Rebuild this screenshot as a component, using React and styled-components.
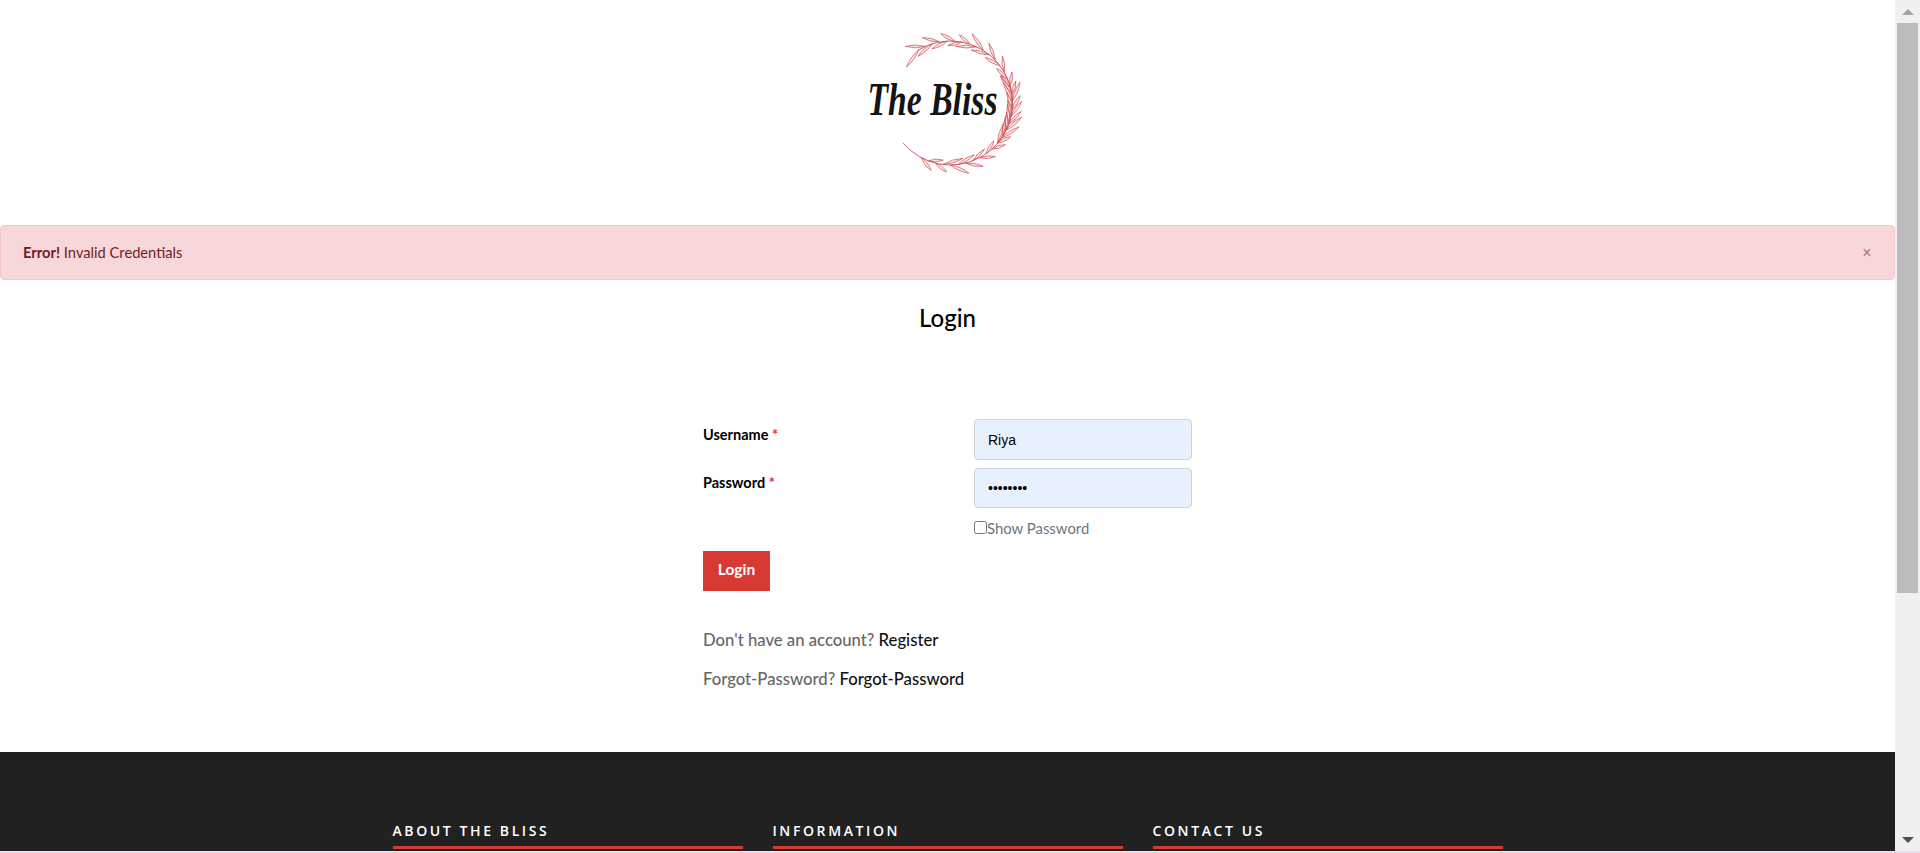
import React, { useState } from 'react';
import styled, { createGlobalStyle } from 'styled-components';

const GlobalStyle = createGlobalStyle`
  html, body {
    margin: 0;
    height: 100%;
    overflow: hidden;
    background: #e6e0f2;
  }
  * {
    box-sizing: border-box;
  }
`;

const CENTER = { x: 950, y: 103 };
const RADIUS = 62;

function polar(angle, r) {
  const rad = (angle * Math.PI) / 180;
  return [CENTER.x + r * Math.cos(rad), CENTER.y + r * Math.sin(rad)];
}

function leafPath(x, y, dir, len, width) {
  const rad = (dir * Math.PI) / 180;
  const ex = x + len * Math.cos(rad);
  const ey = y + len * Math.sin(rad);
  const mx = x + (len / 2) * Math.cos(rad);
  const my = y + (len / 2) * Math.sin(rad);
  const nx = -Math.sin(rad) * width;
  const ny = Math.cos(rad) * width;
  const f = (n) => n.toFixed(1);
  return `M${f(x)} ${f(y)}Q${f(mx + nx)} ${f(my + ny)} ${f(ex)} ${f(ey)}Q${f(mx - nx)} ${f(my - ny)} ${f(x)} ${f(y)}Z`;
}

function makeBranch(from, to, step, leafFrom) {
  const sign = Math.sign(to - from);
  const leaves = [];
  let side = 1;
  for (let a = leafFrom; sign > 0 ? a <= to : a >= to; a += step * sign) {
    const [x, y] = polar(a, RADIUS);
    const tangent = a + 90 * sign;
    const len = 14 + ((Math.abs(a) * 7) % 8);
    leaves.push(leafPath(x, y, tangent + side * 24, len, 2.8));
    side = -side;
  }
  const [sx, sy] = polar(from, RADIUS);
  const [ex, ey] = polar(to, RADIUS);
  const sweep = sign > 0 ? 1 : 0;
  const large = Math.abs(to - from) > 180 ? 1 : 0;
  return {
    stem: `M${sx} ${sy}A${RADIUS} ${RADIUS} 0 ${large} ${sweep} ${ex} ${ey}`,
    leaves,
  };
}

const branches = [makeBranch(40, -122, 7, 40), makeBranch(140, -16, 7, 118)];

function Logo() {
  return (
    <svg width="210" height="180" viewBox="842.5 10 210 180" role="img" aria-label="The Bliss">
      {branches.map((branch, i) => (
        <g key={i} stroke="#cf4c52" strokeWidth="0.7" fill="none">
          <path d={branch.stem} strokeWidth="0.9" />
          {branch.leaves.map((d, j) => (
            <path key={j} d={d} fill="#e58a8c" fillOpacity="0.22" />
          ))}
        </g>
      ))}
      <text
        x="867"
        y="115"
        textLength="130"
        lengthAdjust="spacingAndGlyphs"
        fontFamily="'Liberation Serif', serif"
        fontStyle="italic"
        fontWeight="700"
        fontSize="46"
        fill="#141414"
      >
        The Bliss
      </text>
    </svg>
  );
}

function FakeScrollbar() {
  return (
    <Rail>
      <RailArrow>
        <svg width="12" height="6" viewBox="0 0 12 6">
          <path d="M6 0L12 6H0Z" fill="#a3a3a3" />
        </svg>
      </RailArrow>
      <RailTrack>
        <RailThumb />
      </RailTrack>
      <RailArrow>
        <svg width="12" height="6" viewBox="0 0 12 6">
          <path d="M0 0H12L6 6Z" fill="#505050" />
        </svg>
      </RailArrow>
    </Rail>
  );
}

export default function App() {
  const [showPassword, setShowPassword] = useState(false);
  const [alertOpen, setAlertOpen] = useState(true);

  return (
    <Viewport>
      <GlobalStyle />
      <Page>
        <Header>
          <Logo />
        </Header>
        <AlertSlot>
          {alertOpen && (
            <Alert>
              <AlertText>
                <strong>Error!</strong> Invalid Credentials
              </AlertText>
              <CloseButton onClick={() => setAlertOpen(false)}>×</CloseButton>
            </Alert>
          )}
        </AlertSlot>
        <Title>Login</Title>
        <Form onSubmit={(e) => e.preventDefault()}>
          <FieldGrid>
            <Label $top={6}>
              Username <Required>*</Required>
            </Label>
            <Input defaultValue="Riya" $height={41} />
            <Label $top={5}>
              Password <Required>*</Required>
            </Label>
            <Input
              type={showPassword ? 'text' : 'password'}
              defaultValue="password"
              $height={40}
            />
            <ShowPassword>
              <Checkbox
                type="checkbox"
                checked={showPassword}
                onChange={(e) => setShowPassword(e.target.checked)}
              />
              Show Password
            </ShowPassword>
          </FieldGrid>
          <SubmitButton type="submit">Login</SubmitButton>
          <HelpLine>
            Don't have an account? <HelpLink href="#register">Register</HelpLink>
          </HelpLine>
          <HelpLine>
            Forgot-Password? <HelpLink href="#forgot">Forgot-Password</HelpLink>
          </HelpLine>
        </Form>
        <Footer>
          <FooterRow>
            <FooterHeading>About The Bliss</FooterHeading>
            <FooterHeading>Information</FooterHeading>
            <FooterHeading>Contact Us</FooterHeading>
          </FooterRow>
        </Footer>
      </Page>
      <FakeScrollbar />
    </Viewport>
  );
}

const Viewport = styled.div`
  height: calc(100vh - 2px);
  display: flex;
  background: #fff;
  font-family: 'Lato', 'Open Sans', sans-serif;
  color: #000;
`;

const Page = styled.main`
  flex: 1;
  min-width: 0;
  overflow: hidden;
`;

const Rail = styled.div`
  width: 25px;
  flex: none;
  display: flex;
  flex-direction: column;
  background: #f0f0f0;
`;

const RailArrow = styled.div`
  height: 23px;
  flex: none;
  display: flex;
  align-items: center;
  justify-content: center;
`;

const RailTrack = styled.div`
  flex: 1;
  padding: 0 2px;
`;

const RailThumb = styled.div`
  height: 570px;
  background: #bcbcbc;
`;

const Header = styled.header`
  height: 225px;
  padding-top: 10px;
  display: flex;
  justify-content: center;
  align-items: flex-start;
`;

const AlertSlot = styled.div`
  height: 55px;
`;

const Alert = styled.div`
  height: 55px;
  padding: 0 22px;
  display: flex;
  align-items: center;
  justify-content: space-between;
  background: #f8d7da;
  border: 1px solid #f5c6cb;
  border-radius: 4px;
  color: #721c24;
  font-size: 14.7px;
`;

const AlertText = styled.span`
  padding-bottom: 2px;

  strong {
    font-weight: 700;
  }
`;

const CloseButton = styled.button`
  border: none;
  background: none;
  padding: 0;
  width: 10px;
  font-family: 'Liberation Sans', sans-serif;
  font-size: 16px;
  line-height: 1;
  color: #721c24;
  opacity: 0.55;
  cursor: pointer;
`;

const Title = styled.h2`
  margin: 0;
  height: 139px;
  padding-top: 21px;
  text-align: center;
  font-size: 24px;
  line-height: 34px;
  font-weight: 500;
`;

const Form = styled.form`
  width: 489px;
  height: 333px;
  margin: 0 auto;
`;

const FieldGrid = styled.div`
  display: grid;
  grid-template-columns: 271px 218px;
  row-gap: 8px;
`;

const Label = styled.label`
  padding-top: ${(p) => p.$top}px;
  font-size: 14.5px;
  line-height: 20px;
  font-weight: 700;
`;

const Required = styled.span`
  color: #f0233c;
`;

const Input = styled.input`
  width: 218px;
  height: ${(p) => p.$height}px;
  padding: 0 13px;
  background: #e8f0fe;
  border: 1px solid #ced4da;
  border-radius: 4px;
  font-family: 'Liberation Sans', sans-serif;
  font-size: 14px;
  color: #000;
  outline: none;
`;

const ShowPassword = styled.label`
  grid-column: 2;
  margin-top: 2px;
  height: 20px;
  display: flex;
  align-items: center;
  font-size: 14.9px;
  color: #6c757d;
`;

const Checkbox = styled.input`
  width: 13px;
  height: 13px;
  margin: 0 0 2px;
`;

const SubmitButton = styled.button`
  display: block;
  width: 67px;
  height: 40px;
  margin: 13px 0 37px;
  padding: 0 0 5px;
  border: none;
  background: #d63a33;
  color: #fff;
  font-family: 'Lato', sans-serif;
  font-size: 15.5px;
  font-weight: 700;
  cursor: pointer;
`;

const HelpLine = styled.p`
  margin: 0 0 15px;
  font-size: 16.7px;
  line-height: 24px;
  font-weight: 500;
  color: #666;
`;

const HelpLink = styled.a`
  color: #111;
  text-decoration: none;
`;

const Footer = styled.footer`
  height: 450px;
  padding-top: 68px;
  background: #212121;
`;

const FooterRow = styled.div`
  width: 1110px;
  margin: 0 auto;
  display: grid;
  grid-template-columns: repeat(3, 350px);
  column-gap: 30px;
`;

const FooterHeading = styled.h4`
  margin: 0;
  padding-bottom: 4px;
  border-bottom: 3px solid #d63a33;
  font-family: 'Open Sans', sans-serif;
  font-size: 14px;
  line-height: 22px;
  font-weight: 600;
  letter-spacing: 2.6px;
  text-transform: uppercase;
  color: #fff;
`;
